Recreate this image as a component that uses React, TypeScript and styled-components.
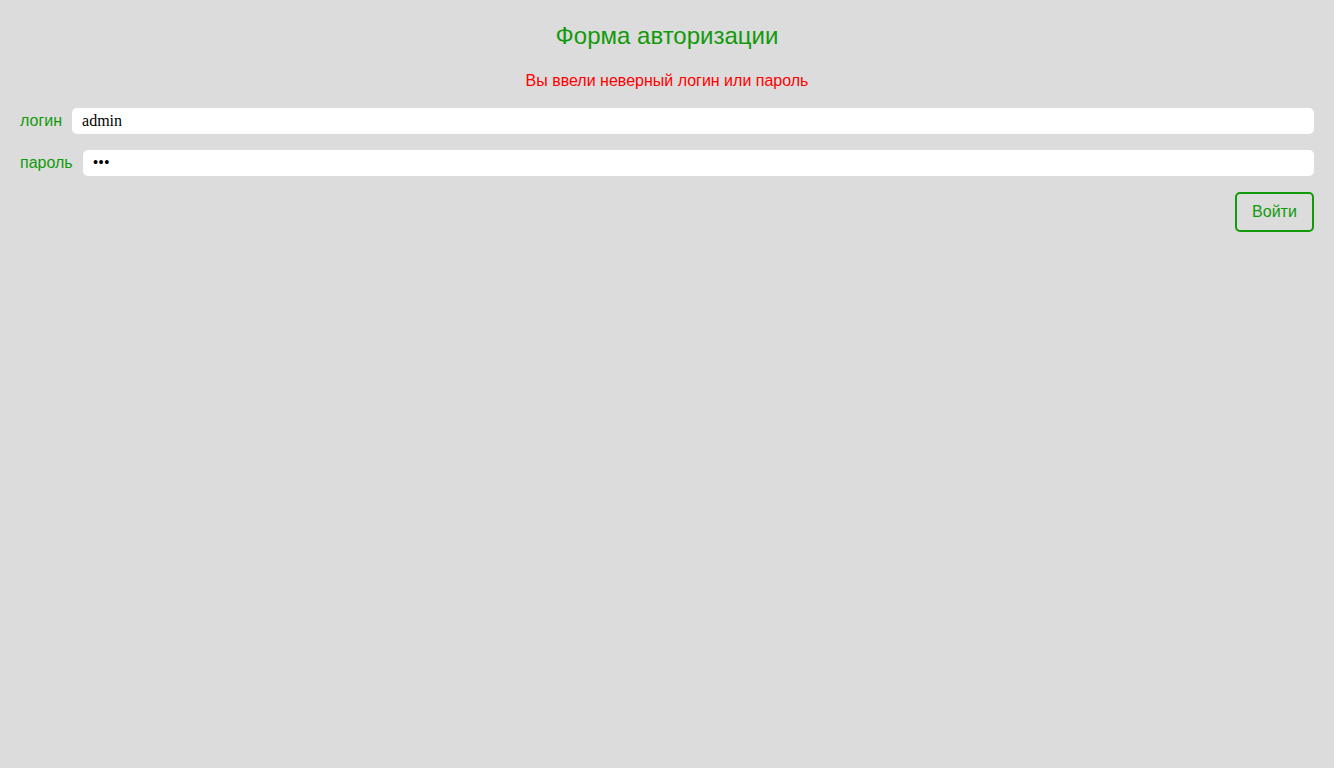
import React from "react";
import styled, { createGlobalStyle } from "styled-components";

const GREEN = "#119a0a";

const Global = createGlobalStyle`
  html, body { margin: 0; padding: 0; background: #dcdcdc; }
  body { font-family: "Liberation Sans", Arial, sans-serif; }
  * { box-sizing: border-box; }
`;

const Page = styled.div`
  min-height: 768px;
  padding: 22px 20px 20px;
  background: #dcdcdc;
`;

const Title = styled.h1`
  margin: 0;
  font-size: 24px;
  line-height: 28px;
  font-weight: normal;
  color: ${GREEN};
  text-align: center;
`;

const ErrorText = styled.div`
  margin-top: 21px;
  font-size: 16px;
  line-height: 20px;
  color: #ff0000;
  text-align: center;
`;

const Form = styled.form`
  margin-top: 17px;
  display: flex;
  flex-direction: column;
  gap: 16px;
`;

const Row = styled.label`
  display: flex;
  align-items: center;
  gap: 10px;
`;

const Label = styled.span`
  font-size: 16px;
  color: ${GREEN};
  white-space: nowrap;
`;

const Input = styled.input`
  flex: 1;
  height: 26px;
  border: none;
  border-radius: 5px;
  background: #fff;
  padding: 0 10px;
  font-family: "Liberation Serif", "Times New Roman", serif;
  font-size: 16px;
  color: #000;
  outline: none;
`;

const Actions = styled.div`
  display: flex;
  justify-content: flex-end;
`;

const Button = styled.button`
  height: 40px;
  width: 79px;
  border: 2px solid ${GREEN};
  border-radius: 5px;
  background: transparent;
  color: ${GREEN};
  font-family: "Liberation Sans", Arial, sans-serif;
  font-size: 16px;
  cursor: pointer;
`;

export default function App() {
  return (
    <>
      <Global />
      <Page>
        <Title>Форма авторизации</Title>
        <ErrorText>Вы ввели неверный логин или пароль</ErrorText>
        <Form onSubmit={(e) => e.preventDefault()}>
          <Row>
            <Label>логин</Label>
            <Input type="text" defaultValue="admin" />
          </Row>
          <Row>
            <Label>пароль</Label>
            <Input type="password" defaultValue="123" />
          </Row>
          <Actions>
            <Button type="submit">Войти</Button>
          </Actions>
        </Form>
      </Page>
    </>
  );
}
